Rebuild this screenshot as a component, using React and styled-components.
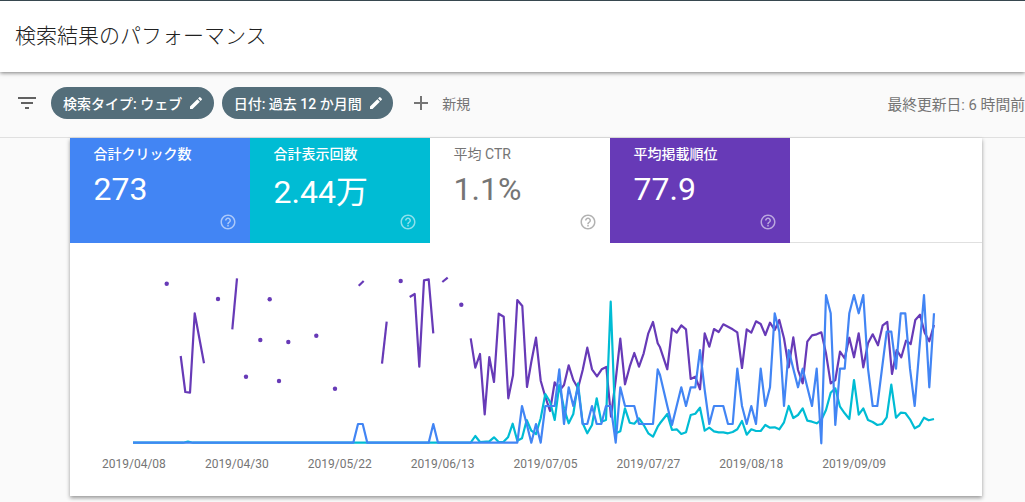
import React from 'react';
import styled, { createGlobalStyle } from 'styled-components';
import { MdFilterList, MdEdit, MdAdd, MdHelpOutline } from 'react-icons/md';

const FONT = `Roboto, "Noto Sans CJK JP", "Noto Sans", sans-serif`;

// points read off the chart, x and y at 3x from the given origin
const trace = (ox, pts) => pts.map(([x, y]) => [ox + x / 3, 270 + y / 3]);
const toLine = (pts) => pts.map(([x, y]) => `${x.toFixed(1)},${y.toFixed(1)}`).join(' ');

const purpleDots = [[166.7, 283.7], [218, 299], [269.7, 299.3], [260.3, 340], [288.3, 342], [316.3, 335.7], [246, 376.7], [279, 381], [335, 388.7], [400.7, 281], [461.3, 304.7]];

const purpleLines = [
  trace(120, [[182, 258], [196, 366], [210, 368], [224, 130], [252, 280]]),
  trace(120, [[337, 178], [351, 25]]),
  trace(120, [[716, 47], [731, 33]]),
  trace(120, [[786, 281], [800, 155]]),
  trace(380, [[89, 81], [104, 72], [118, 290], [132, 31], [146, 28], [160, 190]]),
  trace(380, [[187, 36], [203, 23]]),
  [
    ...trace(380, [[272, 205], [286, 293], [300, 252], [314, 433], [328, 261], [342, 336], [356, 131], [371, 140], [385, 385], [399, 316], [412, 90], [427, 108], [441, 351], [454, 276], [468, 203], [482, 332], [496, 380], [510, 423], [524, 337], [538, 362], [552, 345], [566, 286], [580, 330], [594, 355], [608, 300], [622, 233], [636, 298], [651, 319], [665, 298], [679, 291], [693, 440], [707, 330], [721, 206], [735, 343], [749, 290], [763, 249], [777, 290], [791, 250], [805, 190], [819, 156], [833, 220]]),
    ...trace(660, [[0, 232], [22, 298], [36, 176], [50, 188], [64, 166], [78, 178], [92, 327], [106, 320], [120, 358], [134, 190], [148, 230], [162, 177], [176, 186], [190, 163], [204, 170], [218, 178], [232, 187], [246, 294], [260, 178], [274, 188], [288, 154], [302, 162], [316, 195], [330, 158], [344, 180], [358, 150], [372, 205], [386, 292], [400, 202], [414, 300], [428, 340], [442, 215], [456, 196], [470, 193], [484, 187], [498, 250], [512, 340], [526, 330], [540, 245], [554, 265], [568, 203], [582, 262], [596, 190], [610, 292], [624, 220], [638, 193], [654, 226], [668, 166], [682, 156], [696, 312], [710, 240], [724, 262], [738, 212], [752, 222], [766, 150], [780, 134], [794, 188], [808, 214], [822, 165]]),
  ],
];

const teal = [
  [133, 442.7], [183, 442.7], [188, 441.5], [193, 442.7],
  ...trace(380, [[272, 518], [286, 498], [300, 516], [328, 514], [342, 502], [356, 516], [370, 516], [384, 502], [398, 461], [412, 512], [426, 505], [440, 450], [454, 482], [468, 492], [482, 445], [496, 372], [510, 395], [524, 450], [538, 345], [552, 415], [566, 460], [580, 432], [594, 340], [608, 460], [622, 490], [636, 465], [650, 385], [664, 455], [678, 450], [692, 95], [707, 490], [721, 484], [735, 415], [749, 458], [763, 461], [777, 445], [791, 465], [805, 490], [819, 500], [833, 470]]),
  ...trace(660, [[0, 460], [22, 432], [36, 480], [50, 478], [64, 492], [78, 487], [92, 435], [106, 431], [120, 413], [134, 482], [148, 473], [162, 484], [176, 487], [190, 487], [204, 490], [218, 486], [232, 478], [246, 453], [260, 494], [274, 478], [288, 483], [302, 483], [316, 465], [330, 473], [344, 472], [358, 478], [372, 457], [386, 408], [400, 444], [414, 435], [428, 415], [442, 452], [456, 455], [470, 460], [484, 450], [498, 420], [512, 368], [526, 355], [540, 410], [554, 430], [568, 447], [582, 330], [596, 434], [610, 415], [624, 450], [638, 456], [652, 465], [666, 462], [680, 442], [694, 344], [708, 443], [722, 428], [736, 429], [750, 448], [764, 475], [778, 467], [792, 443], [806, 451], [822, 447]]),
];

const blue = [
  [133, 442.7],
  ...trace(120, [[700, 518], [714, 462], [728, 462], [742, 518]]),
  ...trace(380, [[146, 518], [160, 462], [174, 518], [412, 518], [426, 408], [440, 462], [454, 518], [468, 462], [482, 518], [496, 408], [510, 408], [524, 408], [538, 298], [552, 462], [566, 352], [580, 408], [594, 352], [608, 462], [622, 462], [636, 408], [650, 462], [664, 462], [678, 408], [692, 408], [707, 518], [721, 352], [735, 408], [749, 408], [763, 408], [777, 462], [791, 462], [805, 462], [819, 462], [833, 298]]),
  ...trace(660, [[0, 315], [22, 408], [36, 465], [64, 352], [78, 408], [92, 352], [106, 352], [120, 240], [134, 360], [148, 462], [162, 408], [176, 408], [190, 408], [204, 462], [218, 462], [232, 296], [246, 408], [260, 462], [274, 408], [288, 462], [302, 296], [316, 408], [330, 352], [344, 130], [358, 185], [372, 408], [386, 240], [400, 296], [414, 352], [428, 296], [442, 352], [456, 408], [470, 296], [484, 520], [498, 75], [512, 130], [526, 465], [540, 296], [554, 296], [568, 130], [582, 75], [596, 130], [610, 75], [624, 296], [638, 408], [652, 408], [666, 296], [680, 185], [694, 185], [708, 296], [722, 130], [736, 130], [750, 296], [764, 408], [778, 240], [792, 75], [808, 352], [822, 130]]),
];

const metrics = [
  { label: '合計クリック数', value: '273', bg: '#4285f4' },
  { label: '合計表示回数', value: '2.44万', bg: '#00bcd4', drop: true },
  { label: '平均 CTR', value: '1.1%', bg: '#fff', muted: true },
  { label: '平均掲載順位', value: '77.9', bg: '#673ab7' },
];

const dates = ['2019/04/08', '2019/04/30', '2019/05/22', '2019/06/13', '2019/07/05', '2019/07/27', '2019/08/18', '2019/09/09'];

const GlobalStyle = createGlobalStyle`
  html, body {
    margin: 0;
    height: 100%;
    background: #fafafa;
    font-family: ${FONT};
    overflow: hidden;
  }
`;

const Page = styled.div`
  width: 1025px;
  height: 502px;
  overflow: hidden;
`;

const Header = styled.header`
  position: relative;
  z-index: 2;
  height: 71px;
  border-top: 1px solid #37474f;
  background: #fff;
  box-shadow: 0 1px 4px rgba(0, 0, 0, 0.5);
  display: flex;
  align-items: center;
  padding-left: 15px;
`;

const Title = styled.h1`
  margin: 0 0 6px;
  font-size: 21px;
  font-weight: 300;
  color: #212121;
`;

const Toolbar = styled.div`
  height: 65px;
  box-sizing: content-box;
  background: #fafafa;
  border-bottom: 1px solid #e0e0e0;
  display: flex;
  align-items: center;
  padding-left: 15px;
  white-space: nowrap;
`;

const FilterIcon = styled(MdFilterList)`
  font-size: 24px;
  color: #616161;
  margin: 0 12px 3px 0;
`;

const Chip = styled.div`
  height: 32px;
  border-radius: 16px;
  background: #546e7a;
  color: #fff;
  font-size: 14px;
  font-weight: 500;
  display: flex;
  align-items: center;
  padding: 0 9.5px 0 12px;
  margin: 0 8px 3px 0;
  svg {
    font-size: 16px;
    margin-left: 6px;
  }
`;

const NewFilter = styled.div`
  display: flex;
  align-items: center;
  margin: 0 0 3px 8px;
  color: #757575;
  font-size: 14px;
  svg {
    font-size: 24px;
    margin-right: 9px;
  }
`;

const Updated = styled.div`
  margin: 0 0 3px auto;
  font-size: 14.8px;
  color: #757575;
`;

const Card = styled.section`
  width: 912px;
  height: 358px;
  margin-left: 70px;
  background: #fff;
  box-shadow: 0 2px 4px rgba(0, 0, 0, 0.4);
`;

const Tabs = styled.div`
  display: flex;
  height: 105px;
  border-bottom: 1px solid #e0e0e0;
  box-sizing: border-box;
`;

const Tab = styled.div`
  position: relative;
  width: 180px;
  height: 105px;
  box-sizing: border-box;
  padding: 7px 24px 0 23.5px;
  background: ${(p) => p.$bg};
  color: ${(p) => (p.$muted ? '#757575' : '#fff')};
`;

const TabLabel = styled.div`
  font-size: 14px;
  font-weight: ${(p) => (p.$muted ? 400 : 500)};
  line-height: 18px;
`;

const TabValue = styled.div`
  font-size: 32px;
  line-height: 40px;
  margin-top: ${(p) => (p.$drop ? '9px' : '6px')};
`;

const Help = styled(MdHelpOutline)`
  position: absolute;
  right: 13px;
  bottom: 12px;
  font-size: 18px;
  opacity: 0.55;
`;

const ChartArea = styled.div`
  height: 253px;
`;

const Plot = styled.svg`
  display: block;
  width: 912px;
  height: 213px;
`;

const Series = styled.polyline`
  fill: none;
  stroke: ${(p) => p.$color};
  stroke-width: 2.2;
  stroke-linejoin: round;
`;

const Dot = styled.circle`
  fill: #673ab7;
`;

const Axis = styled.div`
  display: flex;
  padding-left: 32px;
`;

const AxisLabel = styled.span`
  width: 102.9px;
  font-size: 12px;
  line-height: 16px;
  color: #757575;
`;

export default function App() {
  return (
    <Page>
      <GlobalStyle />
      <Header>
        <Title>検索結果のパフォーマンス</Title>
      </Header>
      <Toolbar>
        <FilterIcon />
        <Chip>検索タイプ: ウェブ<MdEdit /></Chip>
        <Chip>日付: 過去 12 か月間<MdEdit /></Chip>
        <NewFilter><MdAdd />新規</NewFilter>
        <Updated>最終更新日: 6 時間前</Updated>
      </Toolbar>
      <Card>
        <Tabs>
          {metrics.map((m) => (
            <Tab key={m.label} $bg={m.bg} $muted={m.muted}>
              <TabLabel $muted={m.muted}>{m.label}</TabLabel>
              <TabValue $drop={m.drop}>{m.value}</TabValue>
              <Help />
            </Tab>
          ))}
        </Tabs>
        <ChartArea>
          <Plot viewBox="70 243 912 213">
            {purpleDots.map(([x, y]) => <Dot key={x} cx={x} cy={y} r="2.2" />)}
            {purpleLines.map((pts, i) => <Series key={i} $color="#673ab7" points={toLine(pts)} />)}
            <Series $color="#00bcd4" points={toLine(teal)} />
            <Series $color="#4285f4" points={toLine(blue)} />
          </Plot>
          <Axis>
            {dates.map((d) => <AxisLabel key={d}>{d}</AxisLabel>)}
          </Axis>
        </ChartArea>
      </Card>
    </Page>
  );
}
